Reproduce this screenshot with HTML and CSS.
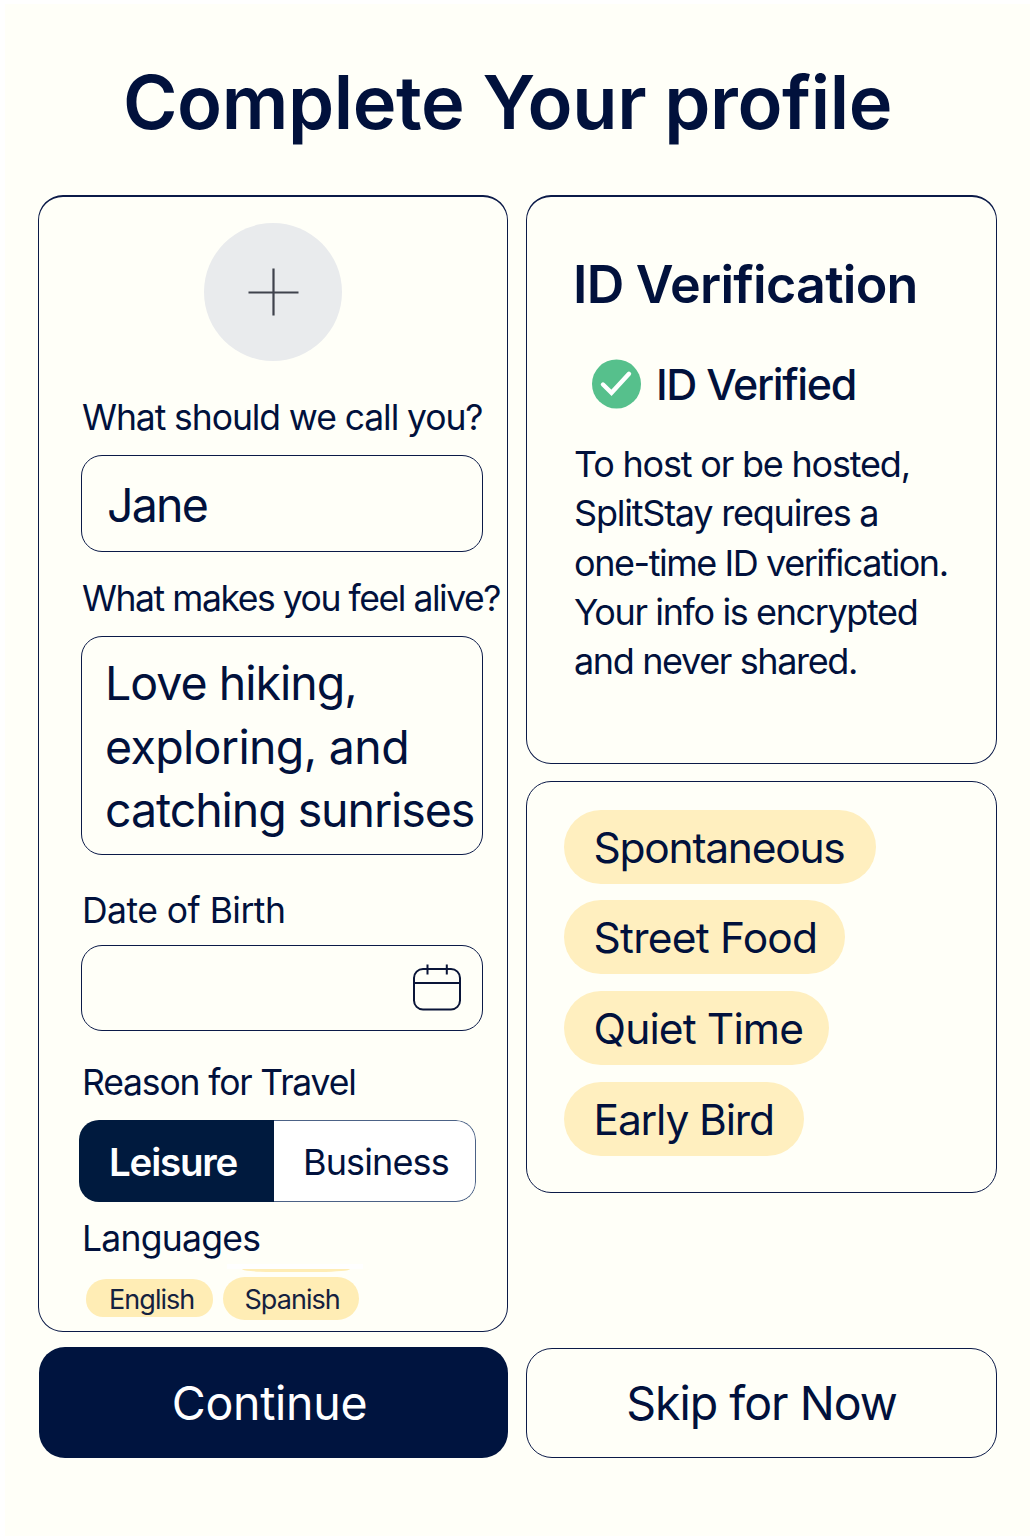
FILE: index.html
```html
<!DOCTYPE html>
<html lang="en">
<head>
<meta charset="utf-8">
<title>Complete Your profile</title>
<link rel="stylesheet" href="styles.css">
</head>
<body>
<main class="page">
  <h1 class="title"><span>Complete Your profile</span></h1>
  <div class="columns">
    <section class="card profile">
      <button class="avatar" aria-label="Add photo">
        <svg width="52" height="52" viewBox="0 0 52 52"><path d="M26.500 2.500V49.500M1.500 26.500H51.500" stroke="#3f424c" stroke-width="2.200" fill="none"/></svg>
      </button>
      <label class="label l-name"><span>What should we call you?</span></label>
      <div class="field name"><span>Jane</span></div>
      <label class="label l-alive"><span>What makes you feel alive?</span></label>
      <div class="field bio"><span class="b1">Love hiking,</span><br><span class="b2">exploring, and</span><br><span class="b3">catching sunrises</span></div>
      <label class="label l-dob"><span>Date of Birth</span></label>
      <div class="field date">
        <svg width="50" height="50" viewBox="0 0 50 50" fill="none" stroke="#0a1538" stroke-width="2"><rect x="2" y="6" width="46" height="40.500" rx="9"/><path d="M2 20H48M15.500 1.500V11.500M34.800 1.500V11.500"/></svg>
      </div>
      <label class="label l-reason"><span>Reason for Travel</span></label>
      <div class="segment">
        <div class="seg on"><span>Leisure</span></div>
        <div class="seg off"><span>Business</span></div>
      </div>
      <label class="label l-lang"><span>Languages</span></label>
      <div class="langs">
        <div class="chip english"><span>English</span></div>
        <div class="chip spanish"><span>Spanish</span></div>
      </div>
    </section>
    <div class="side">
      <section class="card verify">
        <h2 class="heading"><span>ID Verification</span></h2>
        <div class="status">
          <svg width="50" height="50" viewBox="0 0 50 50"><circle cx="25.500" cy="25" r="24.500" fill="#56c08c"/><path d="M12 25.500L20.500 33.800L38 14.800" fill="none" stroke="#fff" stroke-width="4.400" stroke-linecap="round"/></svg>
          <span class="verified">ID Verified</span>
        </div>
        <p class="copy"><span class="c1">To host or be hosted,</span><br><span class="c2">SplitStay requires a</span><br><span class="c3">one-time ID verification.</span><br><span class="c4">Your info is encrypted</span><br><span class="c5">and never shared.</span></p>
      </section>
      <section class="card traits">
        <div class="pill p1"><span>Spontaneous</span></div>
        <div class="pill p2"><span>Street Food</span></div>
        <div class="pill p3"><span>Quiet Time</span></div>
        <div class="pill p4"><span>Early Bird</span></div>
      </section>
    </div>
  </div>
  <div class="actions">
    <button class="btn primary"><span>Continue</span></button>
    <button class="btn secondary"><span>Skip for Now</span></button>
  </div>
</main>
</body>
</html>
```

FILE: styles.css
```css
* { box-sizing: border-box; }
body { margin: 0; background: #fff; color: #01113c; font-family: Inter, "Liberation Sans", sans-serif; }
button { font-family: inherit; color: inherit; padding: 0; cursor: pointer; }
span { white-space: nowrap; }
.page { height: 1536px; background: #fffff8; border: solid #fff; border-width: 4px 2px 0 5px; padding: 58px 33px 0 33px; }
.title { margin: 0; height: 80px; line-height: 80px; padding-left: 85px; font-size: 74px; font-weight: 600; letter-spacing: -0.42px; white-space: nowrap; }
.columns { display: flex; gap: 18px; margin-top: 53px; align-items: flex-start; }
.card { border: 1px solid #0b1a48; border-top-width: 2px; border-radius: 25px; }
.profile { width: 470px; height: 1137px; padding: 26px 24px 0 42px; display: flex; flex-direction: column; }
.avatar { align-self: center; margin: 0 18px 0 0; width: 138px; height: 138px; border: 0; border-radius: 50%; background: #e9ebed; display: flex; align-items: center; justify-content: center; flex: none; }
.label { height: 40px; line-height: 40px; font-size: 35.5px; padding-left: 1px; flex: none; }
.l-name { margin-top: 37px; letter-spacing: -1.08px; }
.l-alive { margin-top: 27px; letter-spacing: -1.44px; }
.l-dob { margin-top: 35px; line-height: 42px; letter-spacing: -0.53px; }
.l-reason { margin-top: 32px; letter-spacing: -1.15px; }
.l-lang { margin-top: 16px; line-height: 42px; letter-spacing: -0.75px; }
.field { width: 402px; border: 1px solid #0b1a48; border-radius: 21px; flex: none; }
.name { height: 97px; margin-top: 17px; padding-left: 25px; font-size: 46.5px; line-height: 98px; letter-spacing: -1.8px; }
.bio { height: 219px; margin-top: 17px; padding: 15px 0 0 23px; font-size: 46.5px; line-height: 63.5px; }
.b1 { letter-spacing: -1px; }
.b2 { letter-spacing: -0.65px; }
.b3 { letter-spacing: -1.07px; }
.date { height: 86px; margin-top: 15px; padding-right: 20px; display: flex; align-items: center; justify-content: flex-end; }
.segment { width: 397px; height: 82px; margin: 17px 0 0 -2px; display: flex; border-radius: 20px; overflow: hidden; flex: none; }
.seg { line-height: 84px; }
.on { width: 195px; padding-left: 30px; background: #001a3e; color: #fff; font-size: 38.5px; font-weight: 600; letter-spacing: -1.2px; }
.off { flex: 1; padding-left: 29px; background: #fff; border: 1px solid #4c6286; border-left: 0; border-radius: 0 20px 20px 0; font-size: 36px; line-height: 82px; letter-spacing: -0.87px; }
.langs { display: flex; align-items: center; gap: 10px; height: 43px; margin: 19px 0 0 5px; }
.chip { position: relative; background: #ffedb5; border-radius: 22px; font-size: 27px; color: #14213f; letter-spacing: -0.95px; }
.english { width: 127px; height: 38px; margin-bottom: 1px; line-height: 41px; padding-left: 23px; border-radius: 20px 20px 17px 17px; }
.spanish { width: 136px; height: 43px; line-height: 45px; padding-left: 21.500px; }
.spanish::before { content: ""; position: absolute; left: 4px; top: -13px; width: 136px; height: 5px; background: #fff; }
.spanish::after { content: ""; position: absolute; left: 19px; top: -8px; width: 108px; height: 3px; background: #ffedb5; border-radius: 0 0 30px 30px / 0 0 3px 3px; }
.side { width: 471px; display: flex; flex-direction: column; gap: 17px; }
.verify { height: 569px; padding: 58px 0 0 46px; }
.heading { margin: 0; height: 60px; line-height: 60px; font-size: 52px; font-weight: 600; letter-spacing: -0.73px; }
.status { display: flex; align-items: center; gap: 15px; height: 50px; margin: 44px 0 0 18px; }
.verified { font-size: 43px; font-weight: 500; letter-spacing: -1.35px; margin-top: -1px; }
.copy { margin: 31px 0 0 1px; font-size: 36px; line-height: 49.3px; }
.c1 { letter-spacing: -1.2px; }
.c2 { letter-spacing: -1.22px; }
.c3 { letter-spacing: -1.44px; }
.c4 { letter-spacing: -1.38px; }
.c5 { letter-spacing: -1.37px; }
.traits { height: 412px; padding: 27.700px 0 0 37px; border-top-width: 1px; display: flex; flex-direction: column; gap: 16.700px; }
.pill { height: 74px; line-height: 75px; border-radius: 37px; padding-left: 29.500px; background: #ffefbf; font-size: 42.5px; flex: none; }
.p1 { width: 312px; letter-spacing: -1.25px; }
.p2 { width: 281px; letter-spacing: -0.77px; }
.p3 { width: 265px; letter-spacing: -0.87px; }
.p4 { width: 240px; letter-spacing: -1.15px; }
.actions { display: flex; gap: 18px; margin-top: 15px; align-items: flex-end; }
.btn { border-radius: 26px; font-size: 46.5px; }
.primary { width: 469px; height: 111px; margin-left: 1px; padding-right: 8px; background: #00143f; border: 0; color: #fff; letter-spacing: -0.3px; }
.secondary { width: 471px; height: 110px; background: none; border: 1px solid #0b1a48; letter-spacing: -1px; }
```
